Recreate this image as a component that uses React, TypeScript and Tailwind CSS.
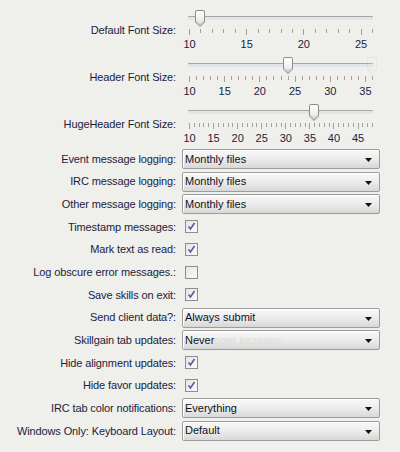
import React from 'react';

type SliderProps = {
  min: number;
  max: number;
  value: number;
  labels: number[];
  ghost?: boolean;
};

type Row =
  | { label: string; kind: 'select'; value: string; ghostText?: string }
  | { label: string; kind: 'check'; checked: boolean };

const TRACK_LEFT = 7;
const TRACK_W = 183;

const Thumb: React.FC<{ x: number; faint?: boolean }> = ({ x, faint }) => (
  <svg
    width="10"
    height="17"
    viewBox="0 0 10 17"
    className={`absolute top-[3px] ${faint ? 'opacity-10' : ''}`}
    style={{ left: x - 5 }}
  >
    <defs>
      <linearGradient id="thumbFill" x1="0" y1="0" x2="0" y2="1">
        <stop offset="0" stopColor="#ffffff" />
        <stop offset="0.6" stopColor="#eeeeee" />
        <stop offset="1" stopColor="#c9c9c9" />
      </linearGradient>
    </defs>
    <path
      d="M2 0.5 H8 A1.5 1.5 0 0 1 9.5 2 V12 L5 16.5 L0.5 12 V2 A1.5 1.5 0 0 1 2 0.5 Z"
      fill="url(#thumbFill)"
      stroke="#8c8c8c"
    />
    <path d="M1.5 12.2 L5 15.5 L8.5 12.2" fill="none" stroke="#b4b4b4" />
  </svg>
);

const Slider: React.FC<SliderProps> = ({ min, max, value, labels, ghost }) => {
  const pos = (v: number) => TRACK_LEFT + ((v - min) * TRACK_W) / (max - min);
  const ticks: number[] = [];
  for (let v = min; v <= max; v++) ticks.push(v);

  return (
    <div className="relative w-[198px] h-[44px]">
      {/* track */}
      <div className="absolute left-[6px] w-[185px] top-[9px] h-[4px] border-t border-[#a6a6a6] bg-[#dfe5e8] rounded-[1px]" />
      {ghost && <Thumb x={pos(max)} faint />}
      <Thumb x={pos(value)} />
      {/* ticks */}
      {ticks.map((t) => (
        <div
          key={t}
          className={`absolute w-px bg-[#a0a0a0] top-[22px] ${labels.includes(t) ? 'h-[6px]' : 'h-[4px]'}`}
          style={{ left: Math.round(pos(t)) }}
        />
      ))}
      {/* numbers */}
      {labels.map((l) => (
        <span
          key={l}
          className="absolute top-[30px] h-[14px] leading-[14px] -translate-x-1/2 text-[11px] text-[#1c1c3c]"
          style={{ left: pos(l) + 0.5 }}
        >
          {l}
        </span>
      ))}
    </div>
  );
};

const Select: React.FC<{ value: string; ghostText?: string }> = ({ value, ghostText }) => (
  <div className="w-[198px] h-[20px] rounded-[2px] border border-[#9c9c9c] bg-gradient-to-b from-[#f9f9f9] via-[#ececec] to-[#d8d8d8] flex items-center pl-[2px] pr-[6px] shadow-[inset_1px_1px_0_#ffffff]">
    <span className="text-[11px] text-[#111122] leading-none">{value}</span>
    {ghostText && <span className="text-[11px] text-[#dcdcd8] leading-none">{ghostText}</span>}
    <span className="flex-1" />
    <svg width="8" height="5" viewBox="0 0 8 5" className="mt-[3px]">
      <path d="M0 0 H7 L3.5 4 Z" fill="#111111" />
    </svg>
  </div>
);

const Check: React.FC<{ checked: boolean }> = ({ checked }) => (
  <div className="ml-[3px] w-[13px] h-[13px] border border-[#8e8e8e] bg-gradient-to-br from-[#e4e4e4] to-[#fbfbfb] flex items-center justify-center">
    {checked && (
      <svg width="9" height="9" viewBox="0 0 9 9">
        <path d="M1.5 4.5 L3.5 7 L7.5 1" fill="none" stroke="#4b5f9c" strokeWidth="1.6" />
      </svg>
    )}
  </div>
);

const sliders: (SliderProps & { label: string })[] = [
  { label: 'Default Font Size:', min: 10, max: 26, value: 11, labels: [10, 15, 20, 25] },
  { label: 'Header Font Size:', min: 10, max: 36, value: 24, labels: [10, 15, 20, 25, 30, 35], ghost: true },
  { label: 'HugeHeader Font Size:', min: 10, max: 48, value: 36, labels: [10, 15, 20, 25, 30, 35, 40, 45] },
];

const rows: Row[] = [
  { label: 'Event message logging:', kind: 'select', value: 'Monthly files' },
  { label: 'IRC message logging:', kind: 'select', value: 'Monthly files' },
  { label: 'Other message logging:', kind: 'select', value: 'Monthly files' },
  { label: 'Timestamp messages:', kind: 'check', checked: true },
  { label: 'Mark text as read:', kind: 'check', checked: true },
  { label: 'Log obscure error messages.:', kind: 'check', checked: false },
  { label: 'Save skills on exit:', kind: 'check', checked: true },
  { label: 'Send client data?:', kind: 'select', value: 'Always submit' },
  { label: 'Skillgain tab updates:', kind: 'select', value: 'Never', ghostText: 'eger increase' },
  { label: 'Hide alignment updates:', kind: 'check', checked: true },
  { label: 'Hide favor updates:', kind: 'check', checked: true },
  { label: 'IRC tab color notifications:', kind: 'select', value: 'Everything' },
  { label: 'Windows Only: Keyboard Layout:', kind: 'select', value: 'Default' },
];

export default function App() {
  return (
    <div
      className="w-[400px] h-[452px] bg-[#efefec] pt-[7px] overflow-hidden"
      style={{ fontFamily: '"Liberation Sans", Arial, sans-serif' }}
    >
      {/* Font size sliders */}
      {sliders.map((s) => (
        <div key={s.label} className="flex h-[47px]">
          <div className="w-[176px] h-[47px] flex items-center justify-end text-[11px] tracking-[-0.12px] text-[#1c1c3c]">
            {s.label}
          </div>
          <div className="ml-[6px]">
            <Slider {...s} />
          </div>
        </div>
      ))}

      {/* Options */}
      <div className="mt-[1px] flex flex-col">
        {rows.map((r) => (
          <div key={r.label} className="flex h-[22.67px]">
            <div className="w-[176px] h-[20px] flex items-center justify-end text-[11px] tracking-[-0.12px] text-[#1c1c3c] whitespace-nowrap">
              {r.label}
            </div>
            <div className="ml-[6px] h-[20px] flex items-center">
              {r.kind === 'select' ? (
                <Select value={r.value} ghostText={r.ghostText} />
              ) : (
                <Check checked={r.checked} />
              )}
            </div>
          </div>
        ))}
      </div>
    </div>
  );
}
